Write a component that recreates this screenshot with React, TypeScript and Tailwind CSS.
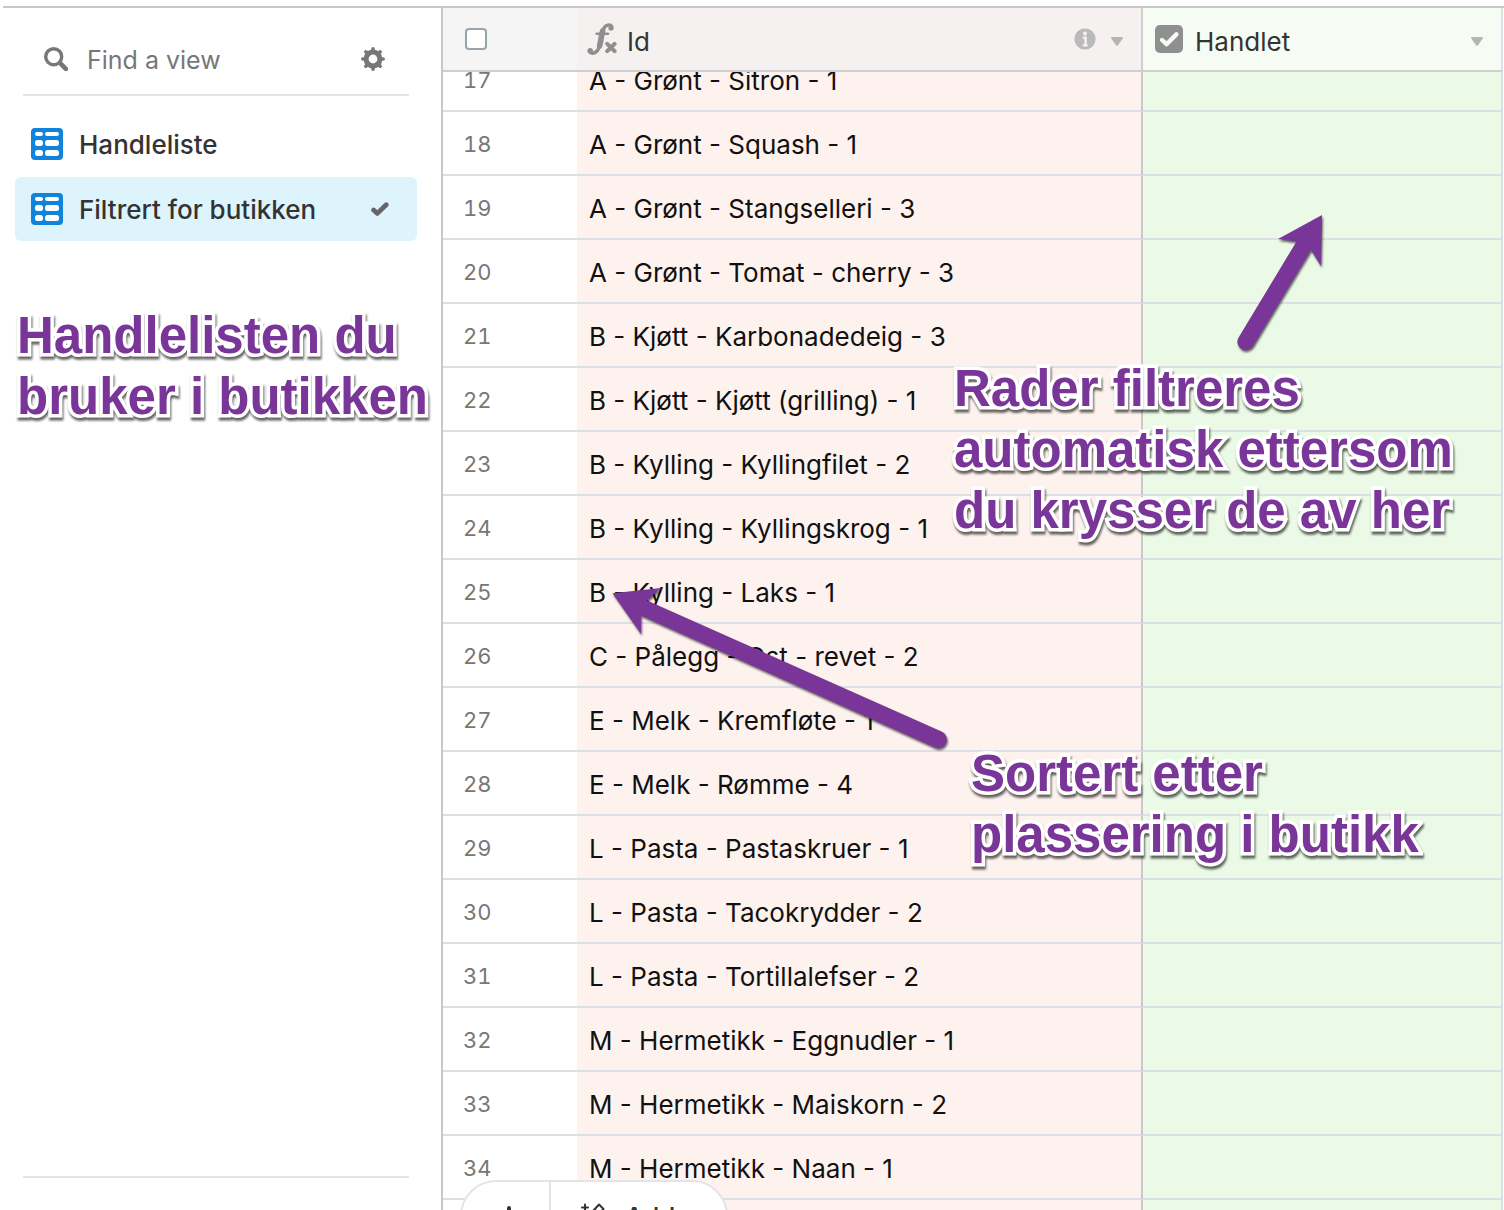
import { useLayoutEffect, useRef, useState } from "react";
import type { ReactNode } from "react";

const views = ["Handleliste", "Filtrert for butikken"];

const rows = [
  { nr: 17, id: "A - Grønt - Sitron - 1" },
  { nr: 18, id: "A - Grønt - Squash - 1" },
  { nr: 19, id: "A - Grønt - Stangselleri - 3" },
  { nr: 20, id: "A - Grønt - Tomat - cherry - 3" },
  { nr: 21, id: "B - Kjøtt - Karbonadedeig - 3" },
  { nr: 22, id: "B - Kjøtt - Kjøtt (grilling) - 1" },
  { nr: 23, id: "B - Kylling - Kyllingfilet - 2" },
  { nr: 24, id: "B - Kylling - Kyllingskrog - 1" },
  { nr: 25, id: "B - Kylling - Laks - 1" },
  { nr: 26, id: "C - Pålegg - Ost - revet - 2" },
  { nr: 27, id: "E - Melk - Kremfløte - 1" },
  { nr: 28, id: "E - Melk - Rømme - 4" },
  { nr: 29, id: "L - Pasta - Pastaskruer - 1" },
  { nr: 30, id: "L - Pasta - Tacokrydder - 2" },
  { nr: 31, id: "L - Pasta - Tortillalefser - 2" },
  { nr: 32, id: "M - Hermetikk - Eggnudler - 1" },
  { nr: 33, id: "M - Hermetikk - Maiskorn - 2" },
  { nr: 34, id: "M - Hermetikk - Naan - 1" },
];

function SearchIcon() {
  return (
    <svg viewBox="0 0 24 24" className="size-6 shrink-0" fill="none" stroke="#777" aria-hidden="true">
      <circle cx="9.7" cy="9.7" r="8" strokeWidth="3.4" />
      <path d="M16.2 16.2l5.6 5.6" strokeWidth="4.6" strokeLinecap="round" />
    </svg>
  );
}

function GearIcon() {
  return (
    <svg viewBox="0 0 24 24" className="size-6" fill="none" stroke="#777" aria-hidden="true">
      <circle cx="12" cy="12" r="6.9" strokeWidth="5" />
      <path
        d="M12 3.5V1.8M12 20.5v1.7M3.5 12H1.8M20.5 12h1.7M6 6L4.800 4.800M18 18l1.200 1.200M6 18l-1.200 1.200M18 6l1.200-1.200"
        strokeWidth="3.6"
        strokeLinecap="round"
      />
    </svg>
  );
}

function GridIcon() {
  return (
    <svg viewBox="0 0 32 32" className="size-8 shrink-0" aria-hidden="true">
      <rect width="32" height="32" rx="4" fill="#1283da" />
      <g fill="#fff">
        <rect x="4" y="4" width="8" height="4" rx="2" />
        <rect x="14" y="4" width="14" height="4" rx="2" />
        <rect x="4" y="12" width="8" height="6" rx="2.5" />
        <rect x="14" y="12" width="14" height="6" rx="2.5" />
        <rect x="4" y="22" width="8" height="6" rx="2.5" />
        <rect x="14" y="22" width="14" height="6" rx="2.5" />
      </g>
    </svg>
  );
}

function FormulaIcon() {
  return (
    <svg viewBox="0 0 30 34" className="h-[34px] w-[30px]" fill="none" stroke="#8f8f8f" aria-hidden="true">
      <path
        d="M24.600 4.400C23.400 2.200 18.400 2 16.200 7.600C14.600 11.800 14 19 12.400 24.600C10.600 30.800 5.400 32.800 2.600 29.600"
        strokeWidth="3.4"
        strokeLinecap="round"
      />
      <path d="M15.600 9C14.400 13 14 19 12.600 24" strokeWidth="5.6" strokeLinecap="round" />
      <path d="M9.600 11.800h11.400" strokeWidth="2.600" strokeLinecap="round" />
      <circle cx="24" cy="6" r="2.600" fill="#8f8f8f" stroke="none" />
      <circle cx="3.200" cy="28.800" r="2.800" fill="#8f8f8f" stroke="none" />
      <path d="M20.200 21.800l7.400 7.400M27.600 21.800l-7.400 7.400" strokeWidth="4" strokeLinecap="round" />
    </svg>
  );
}

function CheckFieldIcon() {
  return (
    <svg viewBox="0 0 28 28" className="size-7" aria-hidden="true">
      <rect width="28" height="28" rx="5" fill="#8f8f8f" />
      <path d="M7 15l4.6 4.2L21.4 9.4" fill="none" stroke="#f6fbf4" strokeWidth="4.4" strokeLinecap="round" strokeLinejoin="round" />
    </svg>
  );
}

function Caret() {
  return (
    <svg viewBox="0 0 12 9" className="h-[9px] w-3" aria-hidden="true">
      <path d="M1 0h10q1.4.3.7 1.6L7 8.2q-1 1-2 0L.3 1.6Q-.4.3 1 0z" fill="#b4b6b2" />
    </svg>
  );
}

function Note({ className, children }: { className: string; children: ReactNode }) {
  return (
    <p
      className={`pointer-events-none absolute z-30 font-['Liberation_Sans',Arial,sans-serif] text-[51px] leading-[61px] font-bold whitespace-nowrap text-[#793698] [-webkit-text-stroke:7px_white] [paint-order:stroke_fill] [filter:drop-shadow(1px_3px_1px_rgba(0,0,0,0.6))] ${className}`}
    >
      {children}
    </p>
  );
}

function Sidebar() {
  const [active, setActive] = useState(views[1]);

  return (
    <aside className="flex w-[443px] shrink-0 flex-col border-r-2 border-[#c8c8c8]">
      <div className="mr-8 ml-[23px] flex h-[88px] items-center gap-[19px] border-b-2 border-[#e4e4e4] pt-4 pr-6 pl-[21px]">
        <SearchIcon />
        <input
          type="text"
          aria-label="Find a view"
          placeholder="Find a view"
          className="min-w-0 flex-1 pt-0.5 text-[25px] leading-8 outline-none placeholder:text-[#777]"
        />
        <button type="button" aria-label="View settings">
          <GearIcon />
        </button>
      </div>
      <nav className="mr-6 ml-[15px] flex flex-col gap-px pt-4">
        {views.map(view => (
          <button
            key={view}
            type="button"
            onClick={() => setActive(view)}
            className={`flex h-16 items-center gap-4 rounded-md px-4 text-left text-[26px] font-medium text-[#333] ${view === active ? "bg-[#def4fd]" : ""}`}
          >
            <GridIcon />
            <span className="flex-1 whitespace-nowrap">{view}</span>
            {view === active && (
              <svg viewBox="0 0 18 14" className="mr-3 h-3.5 w-[18px]" fill="none" stroke="#666" aria-hidden="true">
                <path d="M2.6 8l3.8 3.4L15.2 2.8" strokeWidth="4.8" strokeLinecap="round" strokeLinejoin="round" />
              </svg>
            )}
          </button>
        ))}
      </nav>
      <div className="mt-auto mr-8 mb-8 ml-[23px] h-0.5 bg-[#e4e4e4]" />
    </aside>
  );
}

function Grid() {
  const scroller = useRef<HTMLDivElement>(null);

  // the list opens partly scrolled, under the sticky header
  useLayoutEffect(() => {
    if (scroller.current) scroller.current.scrollTop = 24;
  }, []);

  return (
    <div ref={scroller} className="min-w-0 flex-1 overflow-hidden pr-px">
      <table className="w-full table-fixed border-separate border-spacing-0 text-left">
        <colgroup>
          <col className="w-[134px]" />
          <col className="w-[566px]" />
          <col />
        </colgroup>
        <thead className="sticky top-0 z-10">
          <tr className="h-16 text-[26px] text-[#333]">
            <th className="border-b-2 border-[#cfcfcf] bg-[#f5f5f5] p-0 pl-[22px]">
              <input
                type="checkbox"
                aria-label="Select all rows"
                className="block size-[22px] appearance-none rounded border-2 border-[#98a4ac] bg-white"
              />
            </th>
            <th className="border-r-2 border-b-2 border-[#cfcfcf] bg-[#f5f1f0] p-0 font-normal">
              <div className="flex items-center pr-[18px] pl-2.5">
                <FormulaIcon />
                <span className="ml-2.5 flex-1 pt-1">Id</span>
                <svg viewBox="0 0 22 22" className="mr-[15px] size-[22px]" aria-hidden="true">
                  <circle cx="11" cy="11" r="10.6" fill="#bababa" />
                  <circle cx="11" cy="5.400" r="2" fill="#f5f1f0" />
                  <path d="M8.600 9.600h3v7.600M8.600 17.400h5" fill="none" stroke="#f5f1f0" strokeWidth="2.4" />
                </svg>
                <button type="button" aria-label="Id options" className="pt-1">
                  <Caret />
                </button>
              </div>
            </th>
            <th className="border-r-2 border-b-2 border-[#cfcfcf] border-r-[#dcdfe3] bg-[#f6fbf4] p-0 font-normal">
              <div className="flex items-center pr-[18px] pl-3">
                <CheckFieldIcon />
                <span className="ml-3 flex-1 pt-1">Handlet</span>
                <button type="button" aria-label="Handlet options" className="pt-1">
                  <Caret />
                </button>
              </div>
            </th>
          </tr>
        </thead>
        <tbody>
          {rows.map(row => (
            <tr key={row.nr} className="h-16">
              <td className="border-b-2 border-[#dcdfe3] p-0 pt-0.5 pl-5 text-[22px] text-[#777] tabular-nums">{row.nr}</td>
              <td className="border-r-2 border-b-2 border-[#dcdfe3] border-r-[#cacaca] bg-[#fef2ee] p-0 pt-0.5 pl-3 text-[26px] whitespace-nowrap text-[#111]">
                {row.id}
              </td>
              <td className="border-r-2 border-b-2 border-[#dcdfe3] bg-[#eafae6] p-0" />
            </tr>
          ))}
          <tr className="h-16">
            <td />
            <td className="border-r-2 border-[#cacaca] bg-[#fef2ee]" />
            <td className="border-r-2 border-[#dcdfe3] bg-[#eafae6]" />
          </tr>
        </tbody>
      </table>
    </div>
  );
}

function AddBar() {
  return (
    <div className="absolute -bottom-[42px] left-[460px] z-20 flex h-[72px] w-[268px] overflow-hidden rounded-full border-2 border-[#e3e4e5] bg-white text-[#333]">
      <button type="button" aria-label="Add row" className="flex w-[89px] items-center justify-center border-r-2 border-[#e3e4e5] pl-1.5">
        <svg viewBox="0 0 24 24" className="size-6" fill="none" stroke="#333" strokeWidth="4" strokeLinecap="round" aria-hidden="true">
          <path d="M12 4v16M4 12h16" />
        </svg>
      </button>
      <button type="button" className="flex flex-1 items-center gap-[18px] pl-[30px] text-[26px] font-medium">
        <svg viewBox="0 0 26 26" className="size-[26px]" fill="none" stroke="#333" strokeWidth="2" strokeLinecap="round" strokeLinejoin="round" aria-hidden="true">
          <path d="M4 1.500v6M1 4.500h6M20 19v5M17.500 21.500h5" />
          <path d="M2 19L18 1.500l4.500 4.500L6.500 23.500zM13.500 6.500l4.500 4.500" />
        </svg>
        Add...
      </button>
    </div>
  );
}

export default function App() {
  return (
    <div className="relative flex h-screen flex-col overflow-hidden bg-white pt-1.5 font-[Inter,sans-serif]">
      <div className="ml-[3px] h-0.5 shrink-0 bg-[#c8c8c8]" />
      <main className="flex min-h-0 flex-1">
        <Sidebar />
        <Grid />
      </main>
      <AddBar />

      <Note className="top-[305px] left-[17px]">
        Handlelisten du
        <br />
        bruker i butikken
      </Note>
      <Note className="top-[358px] left-[954px]">
        Rader filtreres
        <br />
        automatisk ettersom
        <br />
        du krysser de av her
      </Note>
      <Note className="top-[743px] left-[971px]">
        Sortert etter
        <br />
        plassering i butikk
      </Note>

      <svg
        viewBox="0 0 100 150"
        className="pointer-events-none absolute top-[210px] left-[1230px] z-30 h-[150px] w-[100px] [filter:drop-shadow(1px_2px_1px_rgba(0,0,0,0.6))]"
        aria-hidden="true"
      >
        <path d="M92 5L48 29l18.500 2.500L8.600 127.500A8.200 8.200 0 0 0 23 136L81 40l10 16z" fill="#793698" />
      </svg>
      <svg
        viewBox="0 0 350 180"
        className="pointer-events-none absolute top-[580px] left-[605px] z-30 h-[180px] w-[350px] [filter:drop-shadow(1px_2px_1px_rgba(0,0,0,0.6))]"
        aria-hidden="true"
      >
        <path d="M7.500 13.300L56 8L42 20.500L336.500 151.500A8.200 8.200 0 0 1 330 167.500L36 35.500L36 54z" fill="#793698" />
      </svg>
    </div>
  );
}
